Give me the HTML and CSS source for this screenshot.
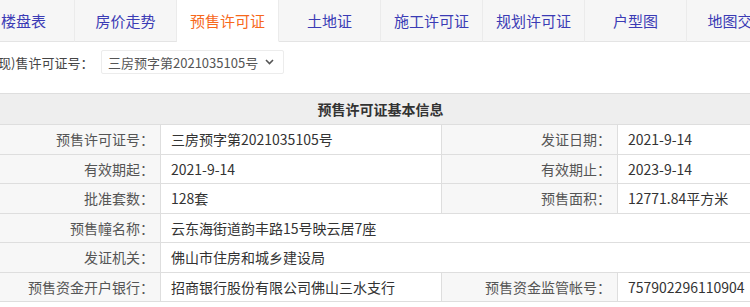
FILE: index.html
```html
<!DOCTYPE html>
<html lang="zh-CN">
<head>
    <meta charset="UTF-8">
    <meta name="viewport" content="width=device-width, initial-scale=1.0">
    <title>预售许可证</title>
    <link rel="stylesheet" href="styles.css">
</head>
<body>
    <div class="page">
        <ul class="tabs">
            <li>楼盘表</li>
            <li>房价走势</li>
            <li class="active">预售许可证</li>
            <li>土地证</li>
            <li>施工许可证</li>
            <li>规划许可证</li>
            <li>户型图</li>
            <li>地图交通</li>
        </ul>

        <div class="picker">
            <label for="permit">现)售许可证号：</label>
            <div class="select-wrap">
                <select id="permit">
                    <option>三房预字第2021035105号</option>
                </select>
                <svg class="chevron" width="9" height="6" viewBox="0 0 9 6">
                    <path d="M1 1 L4.5 4.5 L8 1" fill="none" stroke="#555" stroke-width="1.6"/>
                </svg>
            </div>
        </div>

        <table class="info">
            <colgroup>
                <col class="c-label">
                <col class="c-value">
                <col class="c-label">
                <col class="c-last">
            </colgroup>
            <thead>
                <tr>
                    <th colspan="4">预售许可证基本信息</th>
                </tr>
            </thead>
            <tbody>
                <tr>
                    <td class="label">预售许可证号：</td>
                    <td>三房预字第2021035105号</td>
                    <td class="label">发证日期：</td>
                    <td>2021-9-14</td>
                </tr>
                <tr>
                    <td class="label">有效期起：</td>
                    <td>2021-9-14</td>
                    <td class="label">有效期止：</td>
                    <td>2023-9-14</td>
                </tr>
                <tr>
                    <td class="label">批准套数：</td>
                    <td>128套</td>
                    <td class="label">预售面积：</td>
                    <td>12771.84平方米</td>
                </tr>
                <tr>
                    <td class="label">预售幢名称：</td>
                    <td colspan="3">云东海街道韵丰路15号映云居7座</td>
                </tr>
                <tr>
                    <td class="label">发证机关：</td>
                    <td colspan="3">佛山市住房和城乡建设局</td>
                </tr>
                <tr>
                    <td class="label">预售资金开户银行：</td>
                    <td>招商银行股份有限公司佛山三水支行</td>
                    <td class="label">预售资金监管帐号：</td>
                    <td>757902296110904</td>
                </tr>
            </tbody>
        </table>
    </div>
</body>
</html>
```

FILE: styles.css
```css
body {
    margin: 0;
    font-family: "Noto Sans CJK SC", "Noto Sans", sans-serif;
    color: #333;
    background: #fff;
}
.page {
    width: 750px;
    height: 307px;
    overflow: hidden;
}
.tabs {
    display: flex;
    margin: 0 0 0 -27px;
    padding: 0;
    list-style: none;
}
.tabs li {
    flex: 0 0 101px;
    height: 41px;
    line-height: 42px;
    text-align: center;
    font-size: 15px;
    color: #3b3bb5;
    background-color: #f6f6f6;
    border-right: 1px solid #ebebeb;
    border-bottom: 1px solid #e4e4e4;
    white-space: nowrap;
}
.tabs li.active {
    color: #f7681b;
    background-color: #fff;
    border-bottom-color: #fff;
}
.picker {
    display: flex;
    align-items: center;
    height: 24px;
    margin: 8px 0 0 -2px;
    font-size: 13px;
    color: #444;
}
.picker label {
    width: 103px;
}
.select-wrap {
    position: relative;
}
.picker select {
    display: block;
    width: 183px;
    height: 24px;
    font-family: inherit;
    font-size: 13px;
    color: #555;
    background: #fff;
    border: 1px solid #ececec;
    border-radius: 2px;
    padding: 0 20px 0 6px;
    appearance: none;
    -webkit-appearance: none;
    outline: none;
}
.chevron {
    position: absolute;
    right: 10px;
    top: 9px;
    pointer-events: none;
}
.info {
    width: 792px;
    margin: 19px 0 0 -16px;
    border-collapse: collapse;
    table-layout: fixed;
    font-size: 14px;
}
.c-label {
    width: 176px;
}
.c-value {
    width: 281px;
}
.c-last {
    width: 159px;
}
.info th {
    height: 30px;
    padding: 0;
    background-color: #eeeeee;
    border: 1px solid #dedede;
    font-size: 14px;
    font-weight: bold;
    color: #333;
    text-align: center;
}
.info td {
    height: 28.5px;
    padding: 0 10px;
    border: 1px solid #dedede;
    color: #333;
    white-space: nowrap;
}
.info td.label {
    padding-right: 6px;
    text-align: right;
    color: #555;
    background-color: #f7f7f7;
}
```
